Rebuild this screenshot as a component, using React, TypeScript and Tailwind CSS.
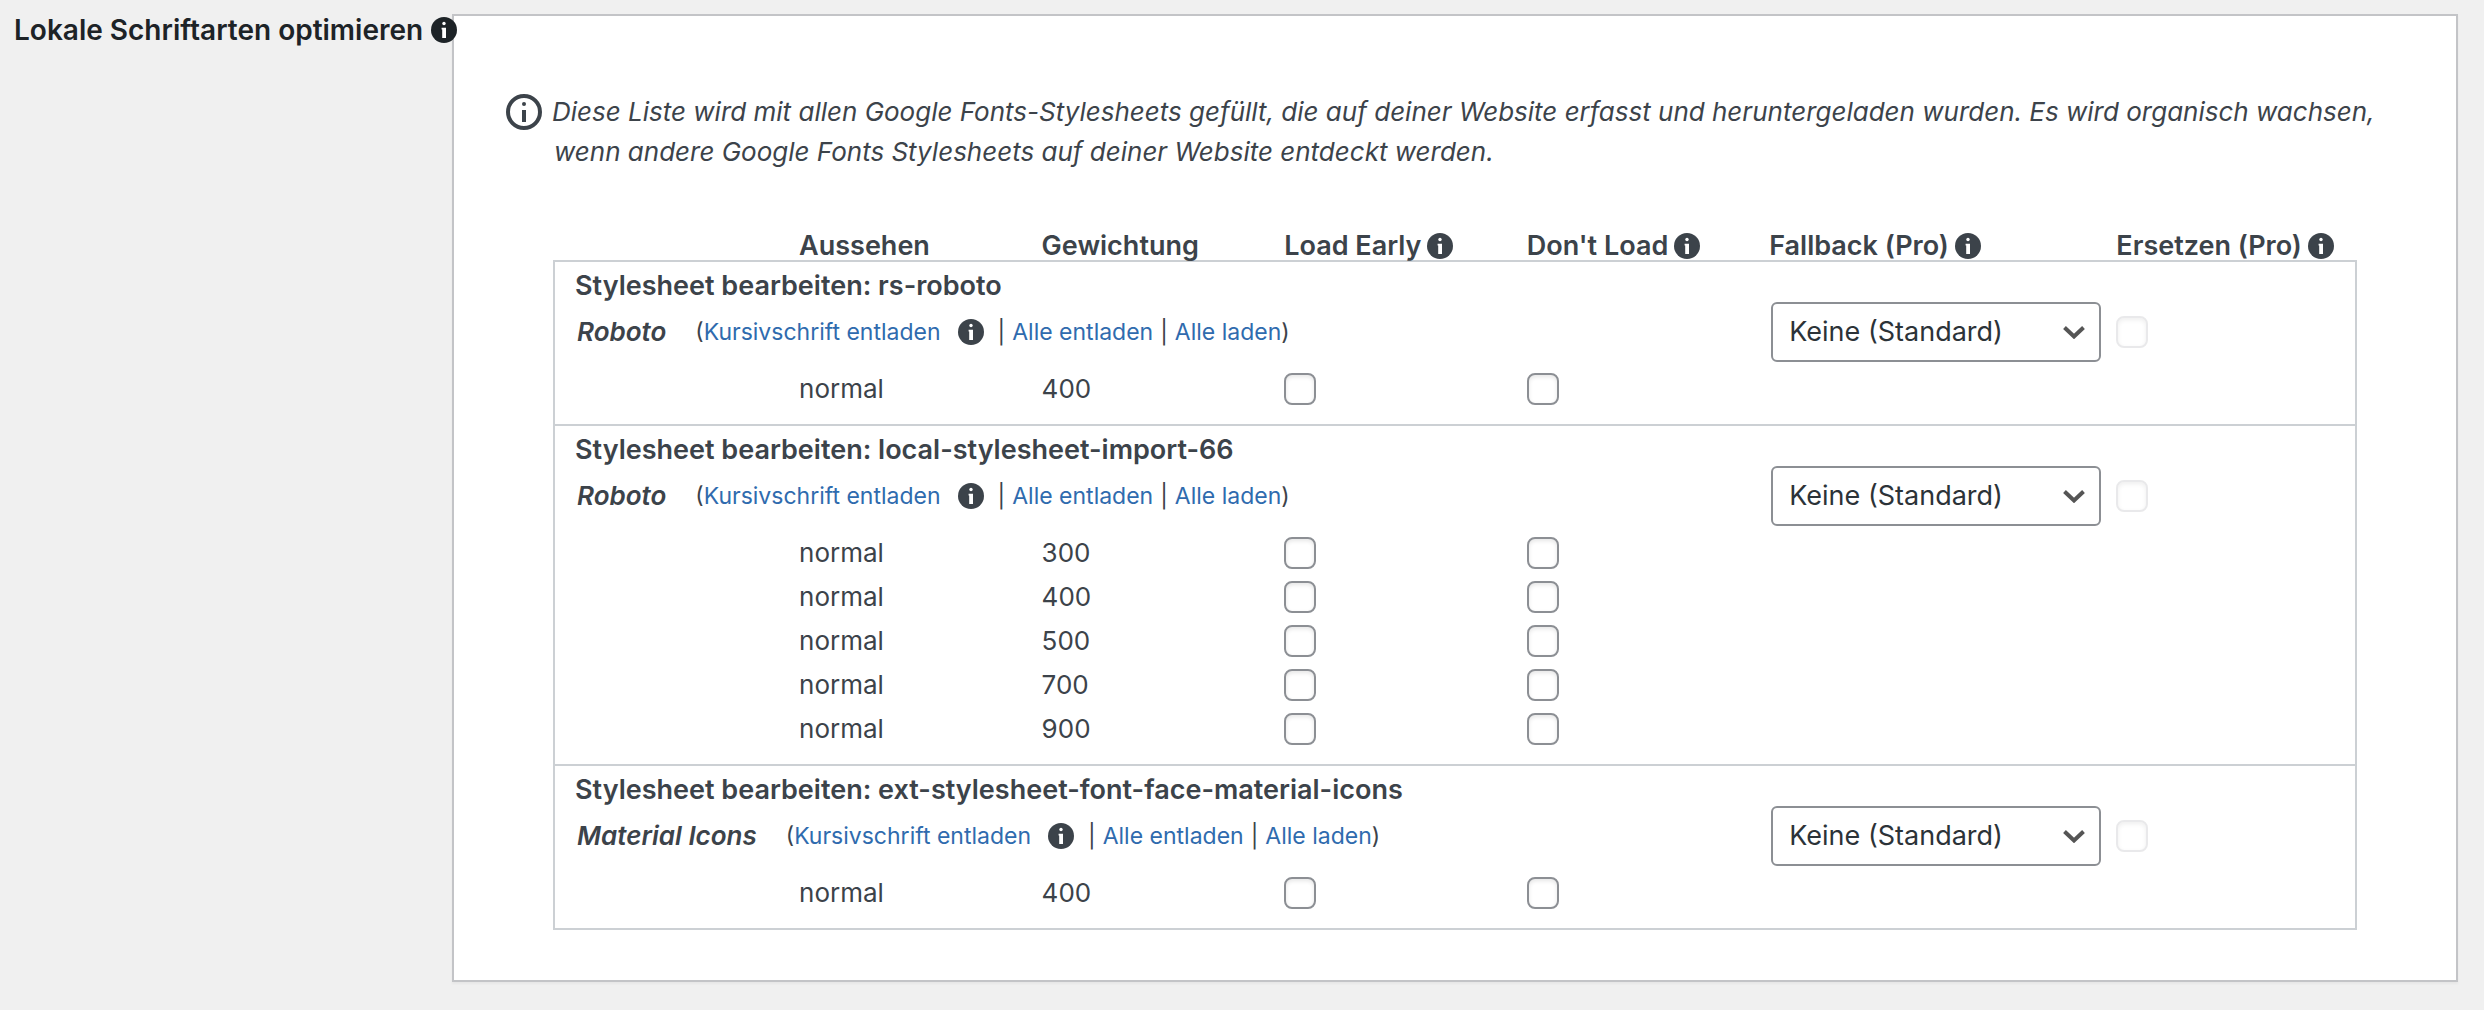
import { useState } from 'react';
import clsx from 'clsx';

interface FontFamily {
  handle: string;
  family: string;
  weights: string[];
}

const stylesheets: FontFamily[] = [
  { handle: 'rs-roboto', family: 'Roboto', weights: ['400'] },
  { handle: 'local-stylesheet-import-66', family: 'Roboto', weights: ['300', '400', '500', '700', '900'] },
  { handle: 'ext-stylesheet-font-face-material-icons', family: 'Material Icons', weights: ['400'] },
];

const columns = [
  { label: 'Aussehen', info: false },
  { label: 'Gewichtung', info: false },
  { label: 'Load Early', info: true },
  { label: "Don't Load", info: true },
  { label: 'Fallback (Pro)', info: true },
  { label: 'Ersetzen (Pro)', info: true },
];

const InfoIcon = ({ className }: { className?: string }) => (
  <svg viewBox="0 0 26 26" className={clsx('h-[26px] w-[26px] shrink-0', className)} aria-hidden="true">
    <circle cx="13" cy="13" r="13" fill="currentColor" />
    <circle cx="13" cy="6.5" r="1.7" fill="#fff" />
    <path d="M10.6 10.8h4.4v10.2h-3.8v-8.6h-.6z" fill="#fff" />
  </svg>
);

const InfoOutlineIcon = () => (
  <svg viewBox="0 0 36 36" className="h-10 w-9 shrink-0" aria-hidden="true">
    <circle cx="18" cy="18" r="16" fill="none" stroke="currentColor" strokeWidth="4" />
    <circle cx="18" cy="10" r="2" fill="currentColor" />
    <path d="M16 16h4v12h-4z" fill="currentColor" />
  </svg>
);

const Checkbox = ({ label, disabled }: { label: string; disabled?: boolean }) => (
  <input
    type="checkbox"
    aria-label={label}
    disabled={disabled}
    className="block h-8 w-8 appearance-none rounded-lg border-2 border-[#8c8f94] bg-white shadow-[inset_0_2px_4px_rgba(0,0,0,0.1)] checked:bg-[#2271b1] disabled:border-[#dcdcde] disabled:opacity-60"
  />
);

const FallbackSelect = ({ label }: { label: string }) => {
  const [value, setValue] = useState('none');

  return (
    <div className="relative ml-0.5 mr-[15px] text-[#2c3338]">
      <select
        aria-label={label}
        value={value}
        onChange={(e) => setValue(e.target.value)}
        className="block h-[60px] w-full appearance-none rounded-md border-2 border-[#8c8f94] bg-white pl-4 pr-12 text-[27px]"
      >
        <option value="none">Keine (Standard)</option>
        <option value="arial">Arial</option>
        <option value="helvetica">Helvetica</option>
      </select>
      <svg
        viewBox="0 0 22 13"
        className="pointer-events-none absolute right-4 top-6 h-[13px] w-[22px]"
        aria-hidden="true"
      >
        <path d="M1.5 1.5l9.5 9 9.5-9" fill="none" stroke="#555" strokeWidth="4" />
      </svg>
    </div>
  );
};

const ActionLink = ({ children }: { children: string }) => (
  <a href="#" className="text-[#2f6bae]">
    {children}
  </a>
);

const StylesheetGroup = ({ handle, family, weights }: FontFamily) => (
  <tbody className="border-2 border-[#ccd0d4]">
    <tr>
      <th colSpan={7} className="pl-5 pt-[13px] text-left text-[27px] font-semibold leading-[22px]">
        Stylesheet bearbeiten: {handle}
      </th>
    </tr>
    <tr className="h-[70px]">
      <td colSpan={5} className="pl-[22px]">
        <div className="flex items-center gap-[29px]">
          <span className="font-semibold italic">{family}</span>
          <span className="flex items-center gap-[7px] text-[23px]">
            <span>
              (<ActionLink>Kursivschrift entladen</ActionLink>
            </span>
            <InfoIcon className="ml-[10px] mr-[7px]" />
            <span>|</span>
            <ActionLink>Alle entladen</ActionLink>
            <span>|</span>
            <span>
              <ActionLink>Alle laden</ActionLink>)
            </span>
          </span>
        </div>
      </td>
      <td>
        <FallbackSelect label={`Fallback ${handle}`} />
      </td>
      <td>
        <Checkbox label={`Ersetzen ${handle}`} disabled />
      </td>
    </tr>
    {weights.map((weight) => (
      <tr key={weight} className="h-11 last:h-[58px] last:[&>td]:pb-[14px]">
        <td />
        <td>normal</td>
        <td>{weight}</td>
        <td>
          <Checkbox label={`Load Early ${handle} ${weight}`} />
        </td>
        <td>
          <Checkbox label={`Don't Load ${handle} ${weight}`} />
        </td>
        <td colSpan={2} />
      </tr>
    ))}
  </tbody>
);

const App = () => {
  return (
    <div className="flex min-h-screen items-start bg-[#f0f0f0] pb-7 pr-[26px] pt-[14px] font-['Inter',sans-serif] text-[26px] leading-8 text-[#3c434a]">
      <h2 className="relative z-10 flex w-[452px] shrink-0 items-center gap-2 whitespace-nowrap pl-[14px] text-[28px] font-semibold text-[#1d2327]">
        Lokale Schriftarten optimieren
        <InfoIcon />
      </h2>

      <section className="min-w-0 flex-1 border-2 border-[#c3c4c7] bg-white pb-[50px] pl-[52px] pr-20 pt-[76px] shadow-[0_2px_2px_rgba(0,0,0,0.04)]">
        <div className="flex gap-3 italic leading-10">
          <InfoOutlineIcon />
          <p className="-indent-0.5">
            Diese Liste wird mit allen Google Fonts-Stylesheets gefüllt, die auf deiner Website erfasst und
            heruntergeladen wurden. Es wird organisch wachsen, wenn andere Google Fonts Stylesheets auf deiner Website
            entdeckt werden.
          </p>
        </div>

        <div className="pl-[47px] pr-[19px] pt-[60px]">
          <table className="w-full table-fixed border-collapse">
            <colgroup>
              <col className="w-[13.6%]" />
              <col className="w-[13.46%]" />
              <col className="w-[13.46%]" />
              <col className="w-[13.46%]" />
              <col className="w-[13.46%]" />
              <col className="w-[19.26%]" />
              <col />
            </colgroup>
            <thead>
              <tr>
                <td />
                {columns.map(({ label, info }) => (
                  <th key={label} className="whitespace-nowrap text-left text-[27px] font-semibold leading-7">
                    <span className="flex items-center gap-[6px]">
                      {label}
                      {info && <InfoIcon />}
                    </span>
                  </th>
                ))}
              </tr>
            </thead>
            {stylesheets.map((sheet) => (
              <StylesheetGroup key={sheet.handle} {...sheet} />
            ))}
          </table>
        </div>
      </section>
    </div>
  );
};

export default App;
